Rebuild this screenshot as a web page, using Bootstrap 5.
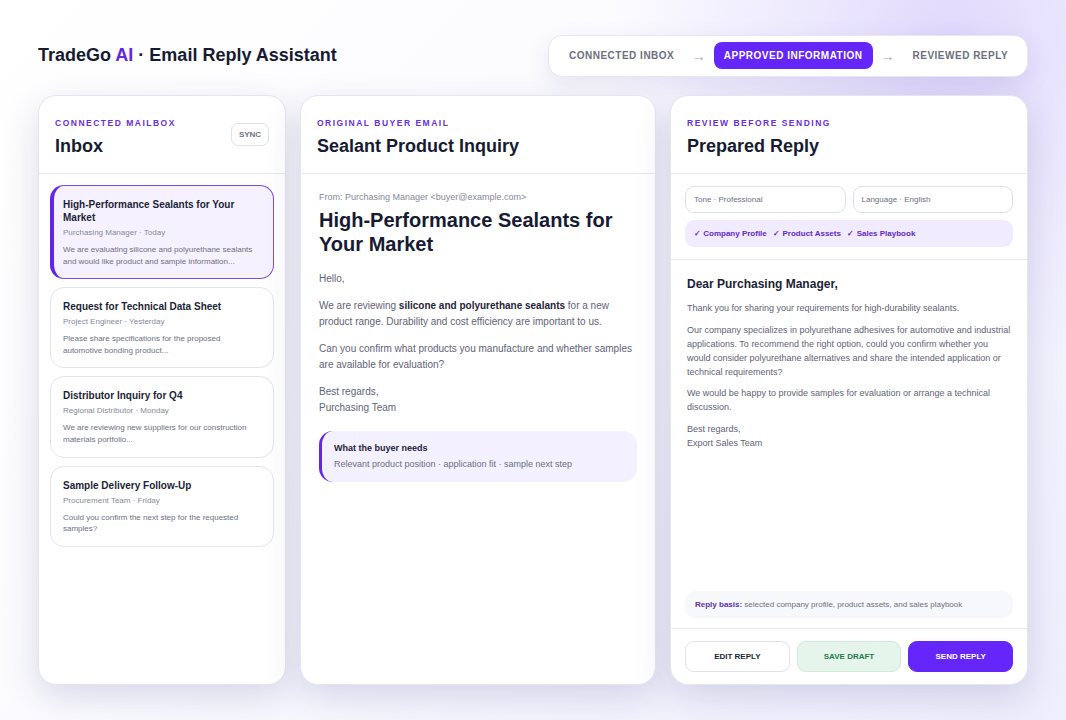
<!DOCTYPE html>
<html lang="en">

<head>
    <meta charset="UTF-8">
    <meta name="viewport" content="width=device-width, initial-scale=1.0">
    <title>TradeGo AI - Email Reply Assistant</title>
    <link href="https://cdn.jsdelivr.net/npm/bootstrap@5.3.0/dist/css/bootstrap.min.css" rel="stylesheet">
    <style>
        html, body { height: 720px; overflow: hidden; }
        body {
            font-family: "Liberation Sans", Arial, sans-serif;
            color: #171a33;
            background:
                radial-gradient(circle at 950px 40px, #e0d8fc 0, rgba(224, 216, 252, .55) 130px, rgba(224, 216, 252, 0) 340px),
                linear-gradient(135deg, #ffffff 0%, #fbfbff 45%, #eeeefd 100%);
        }
        .page-wrap { padding: 35px 38px 35px; height: 720px; }
        .page-top { height: 42px; margin-bottom: 18px; }
        .app-title { font-size: 18px; font-weight: 700; margin: 0; color: #171a33; }
        .app-title span { color: #6427e6; }
        .step-pill {
            height: 42px; width: 480px; padding: 0 19px 1px 20px; white-space: nowrap;
            background: #fff; border: 1px solid #e6e7f2; border-radius: 14px;
            box-shadow: 0 8px 24px rgba(60, 40, 150, .1);
            font-size: 10px; font-weight: 700; letter-spacing: .5px; color: #6b7080;
        }
        .step-arrow { color: #a3a7b5; font-weight: 400; font-size: 14px; line-height: 14px; letter-spacing: 0; margin: 0 8px 0 17.5px; }
        .step-arrow-b { margin: 0 18px 0 8px; }
        .step-on { background: #6426fb; color: #fff; border-radius: 8px; height: 27px; padding: 0 10px; display: flex; align-items: center; }
        .col-grid { display: grid; grid-template-columns: 248px 356px 358px; gap: 14px; height: 590px; }
        .panel {
            background: #fff; border: 1px solid #e4e5f0; border-radius: 18px; overflow: hidden;
            box-shadow: 0 12px 36px rgba(45, 40, 120, .17);
        }
        .panel-head { height: 78px; padding: 22px 16px 0; border-bottom: 1px solid #e6e8f0; flex-shrink: 0; }
        .eyebrow { font-size: 8.5px; font-weight: 700; letter-spacing: 1.5px; color: #6a2ee0; line-height: 11px; }
        .panel-title { font-size: 18px; font-weight: 700; line-height: 24px; margin: 5px 0 0; color: #171a33; }
        .sync-btn {
            font-size: 8px; font-weight: 700; color: #6b7080; background: #fff;
            border: 1px solid #dfe1ea; border-radius: 7px; width: 38px; height: 23px; padding: 0; margin-top: 5px;
        }
        .mail-list { padding: 11px 11px; gap: 8px; }
        .mail-item { border: 1px solid #e3e4ec; border-radius: 14px; padding: 12px 12px 11px; }
        .mail-item.mail-on { background: #f6f1ff; border-color: #7d4fd6; border-left: 4px solid #6426e6; padding-left: 9px; }
        .mail-subject { font-size: 10px; font-weight: 700; line-height: 13px; color: #1c1f38; }
        .mail-meta { font-size: 8px; color: #868a99; line-height: 11px; margin-top: 3px; }
        .mail-snippet { font-size: 8px; color: #6c7080; line-height: 11.6px; margin-top: 6px; }
        .read-pane { padding: 17px 18px; font-size: 10px; line-height: 16px; color: #5f6375; }
        .from-line { font-size: 9px; line-height: 12px; color: #858998; }
        .mail-heading { font-size: 20px; font-weight: 700; line-height: 24px; margin: 5px 0 15px; color: #171a33; }
        .read-pane p { margin: 0 0 11px; }
        .read-pane strong { color: #1f2238; }
        .needs-box { background: #f3f0ff; border-left: 3px solid #6426e6; border-radius: 14px; padding: 10px 12px; margin-top: 15px; height: 51px; }
        .needs-title { font-size: 9px; font-weight: 700; line-height: 14px; color: #1f2238; }
        .needs-text { font-size: 9px; line-height: 14px; color: #6c7080; margin-top: 2px; }
        .reply-controls { padding: 12px 14px; border-bottom: 1px solid #e6e8f0; }
        .pick-row { gap: 7px; }
        .pick-box { flex: 1; height: 27px; border: 1px solid #dfe1ea; border-radius: 9px; font-size: 8px; color: #6c7080; padding: 0 8px; display: flex; align-items: center; }
        .basis-bar { background: #f0ebff; border-radius: 9px; height: 27px; margin-top: 7px; padding: 0 9px; font-size: 8px; font-weight: 700; color: #6528c8; gap: 6.5px; }
        .reply-body { padding: 16px 16px 0; font-size: 9px; line-height: 14px; color: #5f6375; }
        .reply-body h3 { font-size: 12px; font-weight: 700; line-height: 16px; margin: 0 0 9px; color: #1c1f38; }
        .reply-body p { margin: 0 0 7.6px; }
        .basis-note { margin: 0 14px 10px; height: 27px; background: #f7f8fb; border-radius: 10px; font-size: 8px; color: #6c7080; padding: 0 10px; display: flex; align-items: center; }
        .basis-note b { color: #5a30b0; }
        .action-row { border-top: 1px solid #e6e8f0; padding: 12px 14px; gap: 7px; }
        .act-btn { flex: 1; height: 31px; font-size: 8px; font-weight: 700; border-radius: 9px; border: 1px solid #dfe1ea; background: #fff; color: #1c1f38; padding: 0; }
        .act-save { background: #e5f5ec; border-color: #cfe9da; color: #1f7a49; }
        .act-send { background: #6426fb; border-color: #6426fb; color: #fff; }
    </style>
</head>

<body>
    <div class="page-wrap">
        <div class="page-top d-flex justify-content-between align-items-center">
            <h1 class="app-title">TradeGo <span>AI</span> · Email Reply Assistant</h1>
            <div class="step-pill d-flex align-items-center">
                <span>CONNECTED INBOX</span>
                <span class="step-arrow">→</span>
                <span class="step-on">APPROVED INFORMATION</span>
                <span class="step-arrow step-arrow-b">→</span>
                <span>REVIEWED REPLY</span>
            </div>
        </div>

        <div class="col-grid">
            <!-- inbox -->
            <section class="panel d-flex flex-column">
                <div class="panel-head d-flex justify-content-between align-items-start">
                    <div>
                        <div class="eyebrow">CONNECTED MAILBOX</div>
                        <h2 class="panel-title">Inbox</h2>
                    </div>
                    <button class="sync-btn" type="button">SYNC</button>
                </div>
                <div class="mail-list d-flex flex-column">
                    <div class="mail-item mail-on">
                        <div class="mail-subject">High-Performance Sealants for Your Market</div>
                        <div class="mail-meta">Purchasing Manager · Today</div>
                        <div class="mail-snippet">We are evaluating silicone and polyurethane sealants and would like product and sample information...</div>
                    </div>
                    <div class="mail-item">
                        <div class="mail-subject">Request for Technical Data Sheet</div>
                        <div class="mail-meta">Project Engineer · Yesterday</div>
                        <div class="mail-snippet">Please share specifications for the proposed automotive bonding product...</div>
                    </div>
                    <div class="mail-item">
                        <div class="mail-subject">Distributor Inquiry for Q4</div>
                        <div class="mail-meta">Regional Distributor · Monday</div>
                        <div class="mail-snippet">We are reviewing new suppliers for our construction materials portfolio...</div>
                    </div>
                    <div class="mail-item">
                        <div class="mail-subject">Sample Delivery Follow-Up</div>
                        <div class="mail-meta">Procurement Team · Friday</div>
                        <div class="mail-snippet">Could you confirm the next step for the requested samples?</div>
                    </div>
                </div>
            </section>

            <!-- original email -->
            <section class="panel d-flex flex-column">
                <div class="panel-head">
                    <div class="eyebrow">ORIGINAL BUYER EMAIL</div>
                    <h2 class="panel-title">Sealant Product Inquiry</h2>
                </div>
                <div class="read-pane">
                    <div class="from-line">From: Purchasing Manager &lt;buyer@example.com&gt;</div>
                    <div class="mail-heading">High-Performance Sealants for Your Market</div>
                    <p>Hello,</p>
                    <p>We are reviewing <strong>silicone and polyurethane sealants</strong> for a new product range. Durability and cost efficiency are important to us.</p>
                    <p>Can you confirm what products you manufacture and whether samples are available for evaluation?</p>
                    <p>Best regards,<br>Purchasing Team</p>
                    <div class="needs-box">
                        <div class="needs-title">What the buyer needs</div>
                        <div class="needs-text">Relevant product position · application fit · sample next step</div>
                    </div>
                </div>
            </section>

            <!-- prepared reply -->
            <section class="panel d-flex flex-column">
                <div class="panel-head">
                    <div class="eyebrow">REVIEW BEFORE SENDING</div>
                    <h2 class="panel-title">Prepared Reply</h2>
                </div>
                <div class="reply-controls">
                    <div class="pick-row d-flex">
                        <div class="pick-box">Tone · Professional</div>
                        <div class="pick-box">Language · English</div>
                    </div>
                    <div class="basis-bar d-flex align-items-center">
                        <span>✓ Company Profile</span>
                        <span>✓ Product Assets</span>
                        <span>✓ Sales Playbook</span>
                    </div>
                </div>
                <div class="reply-body">
                    <h3>Dear Purchasing Manager,</h3>
                    <p>Thank you for sharing your requirements for high-durability sealants.</p>
                    <p>Our company specializes in polyurethane adhesives for automotive and industrial applications. To recommend the right option, could you confirm whether you would consider polyurethane alternatives and share the intended application or technical requirements?</p>
                    <p>We would be happy to provide samples for evaluation or arrange a technical discussion.</p>
                    <p>Best regards,<br>Export Sales Team</p>
                </div>
                <div class="basis-note mt-auto"><span><b>Reply basis:</b> selected company profile, product assets, and sales playbook</span></div>
                <div class="action-row d-flex">
                    <button class="act-btn" type="button">EDIT REPLY</button>
                    <button class="act-btn act-save" type="button">SAVE DRAFT</button>
                    <button class="act-btn act-send" type="button">SEND REPLY</button>
                </div>
            </section>
        </div>
    </div>

    <script src="https://cdn.jsdelivr.net/npm/bootstrap@5.3.0/dist/js/bootstrap.bundle.min.js"></script>
</body>

</html>
